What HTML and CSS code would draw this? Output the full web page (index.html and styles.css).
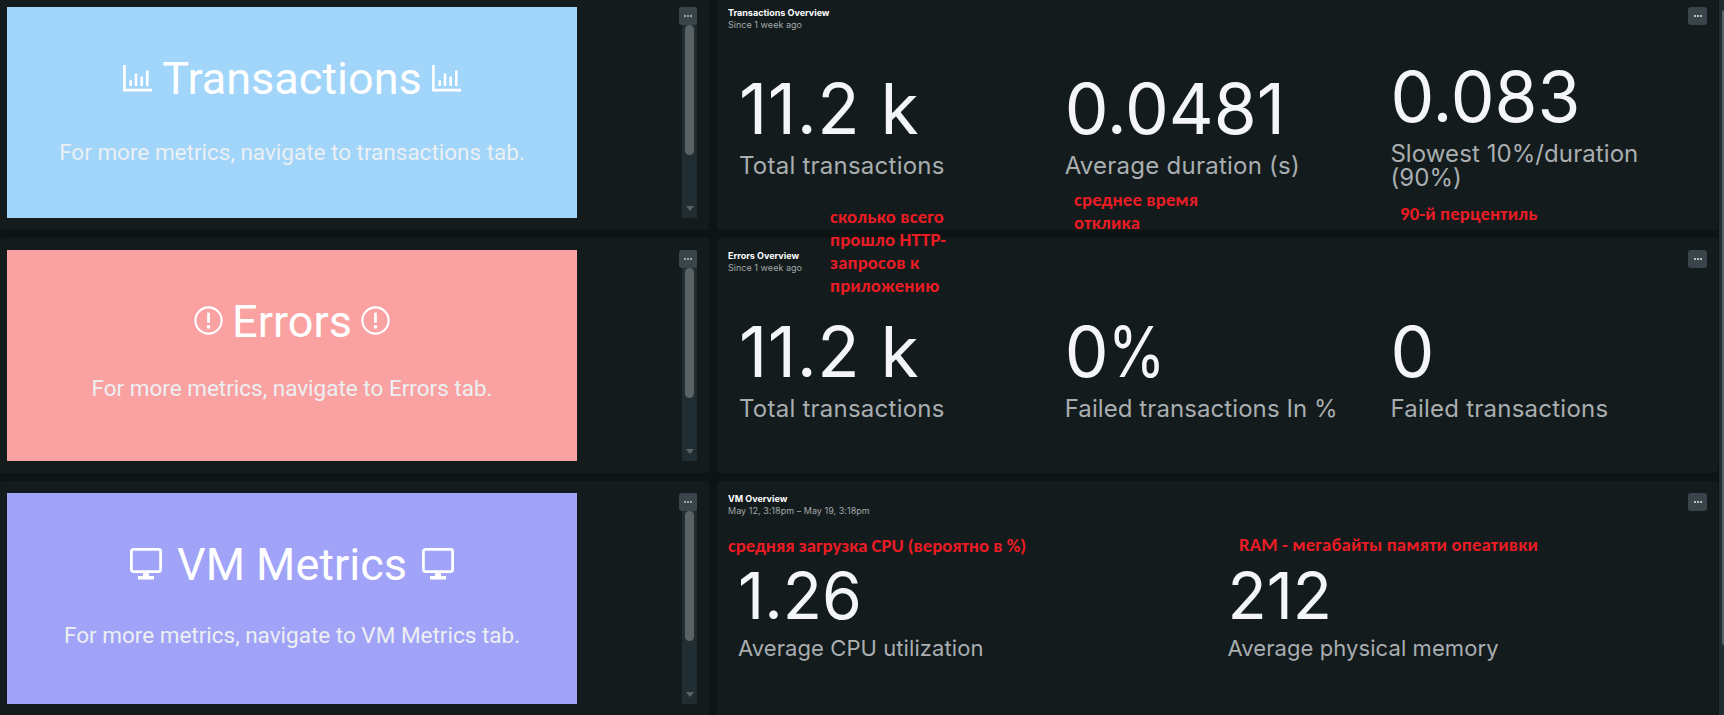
FILE: index.html
```html
<!DOCTYPE html>
<html lang="en">
<head>
<meta charset="utf-8">
<title>Application overview</title>
<link rel="stylesheet" href="styles.css">
</head>
<body>
<svg class="defs" width="0" height="0">
  <symbol id="chart" viewBox="0 0 29 27"><path d="M1.4 0V25.1H29" fill="none" stroke="#fff" stroke-width="2.6"/><path d="M7.7 15.2V21M13 8.4V21M18.7 11.4V21M24.3 5.4V21" fill="none" stroke="#fff" stroke-width="2.6"/></symbol>
  <symbol id="alert" viewBox="0 0 29 29"><circle cx="14.5" cy="14.5" r="13.1" fill="none" stroke="#fff" stroke-width="2.1"/><path d="M14.5 6.6V16.8" stroke="#fff" stroke-width="2.7"/><circle cx="14.5" cy="20.8" r="1.9" fill="#fff"/></symbol>
  <symbol id="monitor" viewBox="0 0 32 32"><rect x="1.4" y="1.4" width="29.2" height="22.2" rx="2" fill="none" stroke="#fff" stroke-width="2.8"/><path d="M13 24h6v4h5v3.4H8V28h5z" fill="#fff"/></symbol>
  <symbol id="dots" viewBox="0 0 8 2"><path d="M0 0h2v2H0zM3 0h2v2H3zM6 0h2v2H6z" fill="currentColor"/></symbol>
</svg>
<div class="page">
  <main class="board">
    <section class="panel nav">
      <div class="banner blue">
        <h2 class="title t1"><svg class="chart"><use href="#chart"/></svg><span>Transactions</span><svg class="chart"><use href="#chart"/></svg></h2>
        <p class="hint h1">For more metrics, navigate to transactions tab.</p>
      </div>
      <div class="track"><i class="thumb"></i><i class="arrow"></i><button class="menu"><svg><use href="#dots"/></svg></button></div>
    </section>
    <section class="panel stats">
      <header class="head"><div><h3>Transactions Overview</h3><p>Since 1 week ago</p></div><button class="menu"><svg><use href="#dots"/></svg></button></header>
      <div class="grid">
        <div class="cell"><b class="spaced">11.2 k</b><span>Total transactions</span></div>
        <div class="cell"><b>0.0481</b><span>Average duration (s)</span></div>
        <div class="cell"><b>0.083</b><span class="tight">Slowest 10%/duration<br>(90%)</span></div>
      </div>
    </section>

    <section class="panel nav">
      <div class="banner red">
        <h2 class="title t2"><svg class="alert"><use href="#alert"/></svg><span>Errors</span><svg class="alert"><use href="#alert"/></svg></h2>
        <p class="hint h2">For more metrics, navigate to Errors tab.</p>
      </div>
      <div class="track"><i class="thumb"></i><i class="arrow"></i><button class="menu"><svg><use href="#dots"/></svg></button></div>
    </section>
    <section class="panel stats">
      <header class="head"><div><h3>Errors Overview</h3><p>Since 1 week ago</p></div><button class="menu"><svg><use href="#dots"/></svg></button></header>
      <div class="grid">
        <div class="cell"><b class="spaced">11.2 k</b><span>Total transactions</span></div>
        <div class="cell"><b>0<i class="pct">%</i></b><span class="tight">Failed transactions In %</span></div>
        <div class="cell"><b>0</b><span>Failed transactions</span></div>
      </div>
    </section>

    <section class="panel nav">
      <div class="banner violet">
        <h2 class="title t3"><svg class="monitor"><use href="#monitor"/></svg><span>VM Metrics</span><svg class="monitor"><use href="#monitor"/></svg></h2>
        <p class="hint h3">For more metrics, navigate to VM Metrics tab.</p>
      </div>
      <div class="track"><i class="thumb"></i><i class="arrow"></i><button class="menu"><svg><use href="#dots"/></svg></button></div>
    </section>
    <section class="panel stats">
      <header class="head"><div><h3>VM Overview</h3><p>May 12, 3:18pm – May 19, 3:18pm</p></div><button class="menu"><svg><use href="#dots"/></svg></button></header>
      <div class="grid two">
        <div class="cell"><b>1.26</b><span>Average CPU utilization</span></div>
        <div class="cell"><b>212</b><span>Average physical memory</span></div>
      </div>
    </section>
  </main>
  <div class="page-scroll"><i></i></div>

  <p class="note n1">сколько всего<br>прошло HTTP-<br>запросов к<br>приложению</p>
  <p class="note n2">среднее время<br>отклика</p>
  <p class="note n3">90-й перцентиль</p>
  <p class="note n4">средняя загрузка CPU (вероятно в %)</p>
  <p class="note n5">RAM - мегабайты памяти опеативки</p>
</div>
</body>
</html>
```
FILE: styles.css
```css
* { box-sizing: border-box; margin: 0; padding: 0; }
body { background: #0e1413; font-family: Inter, sans-serif; overflow: hidden; }
.defs { position: absolute; }
.page { position: relative; display: flex; width: 1724px; height: 715px; overflow: hidden; }
.board { display: grid; grid-template-columns: 709px 1001px; grid-auto-rows: 235px; gap: 8px; width: 1718px; margin-top: -5px; flex: none; }
.panel { background: #131b1d; border-radius: 3px; }

.nav { display: flex; justify-content: space-between; padding: 12px 12px 12px 7px; }
.banner { width: 570px; height: 211px; padding-top: 47px; font-family: Roboto, sans-serif; text-align: center; }
.blue { background: #a2d5fa; }
.red { background: #faa2a1; }
.violet { background: #a1a3f8; }
.title { display: flex; justify-content: center; font-size: 45px; line-height: 50px; font-weight: 400; color: #fff; white-space: nowrap; }
.title svg { flex: none; }
.chart { width: 29px; height: 27px; margin-top: 11px; }
.alert { width: 29px; height: 29px; margin-top: 9px; }
.monitor { width: 32px; height: 32px; margin-top: 8px; }
.t1 { gap: 10px; }
.t2 { gap: 9px; }
.t3 { gap: 15.5px; }
.hint { font-size: 22.5px; line-height: 30px; color: #ecf0f3; white-space: nowrap; }
.h1 { margin-top: 33px; }
.h2 { margin-top: 26px; }
.h3 { margin-top: 30px; }

.track { position: relative; display: flex; flex-direction: column; justify-content: space-between; align-items: center; width: 15px; padding: 18px 0 7px; background: #202d33; }
.thumb { width: 9px; height: 130px; border-radius: 5px; background: #5b6263; }
.arrow { border: solid transparent; border-width: 5px 4.5px 0; border-top-color: #5b6263; }
.menu { display: flex; align-items: center; justify-content: center; width: 19px; height: 18px; border: 0; border-radius: 3px; background: #3a444b; color: #b9bfc2; }
.menu svg { width: 8px; height: 2px; }
.track .menu { position: absolute; top: 0; right: 0; width: 18px; color: #9ba2a5; }

.stats { display: flex; flex-direction: column; padding: 12px 11px; }
.head { display: flex; justify-content: space-between; height: 26px; }
.head h3 { font-size: 9px; line-height: 12px; font-weight: 700; color: #fff; }
.head p { font-size: 9px; line-height: 12px; letter-spacing: 0.03px; color: #a4a9aa; }
.grid { flex: 1; display: grid; grid-template-columns: repeat(3, 325.7px); }
.cell { display: flex; flex-direction: column; justify-content: center; padding: 0 11px; }
.cell b { font-size: 69.5px; line-height: 70px; font-weight: 400; color: #f3f5f6; white-space: nowrap; }
.cell .spaced { letter-spacing: 0.6px; }
.cell span { margin-top: 10px; font-size: 24px; line-height: 24px; letter-spacing: 0.24px; color: #a9aeb0; }
.cell .tight { letter-spacing: 0.08px; }
.pct { display: inline-block; font-style: normal; transform: scaleX(0.84); transform-origin: left; margin-left: -1px; }
.two { grid-template-columns: repeat(2, 1fr); }
.two .cell { padding: 0 10px; }
.two .cell b { font-size: 64.3px; line-height: 65px; }
.two .cell span { margin-top: 8px; font-size: 22px; line-height: 22px; letter-spacing: 0.08px; }

.page-scroll { width: 5px; margin-left: 1px; padding: 10px 0 0 3px; background: #202d33; flex: none; }
.page-scroll i { display: block; height: 635px; background: #5b6263; border-radius: 4px 0 0 4px; }

.note { position: absolute; font: 700 18.67px/23px Carlito, Lato, "Open Sans", sans-serif; letter-spacing: 0.17px; color: #ec1c24; white-space: nowrap; }
.n1 { left: 830px; top: 205px; }
.n2 { left: 1074px; top: 188px; }
.n3 { left: 1400px; top: 202px; }
.n4 { left: 728px; top: 534px; letter-spacing: 0; }
.n5 { left: 1239px; top: 533px; }
```
